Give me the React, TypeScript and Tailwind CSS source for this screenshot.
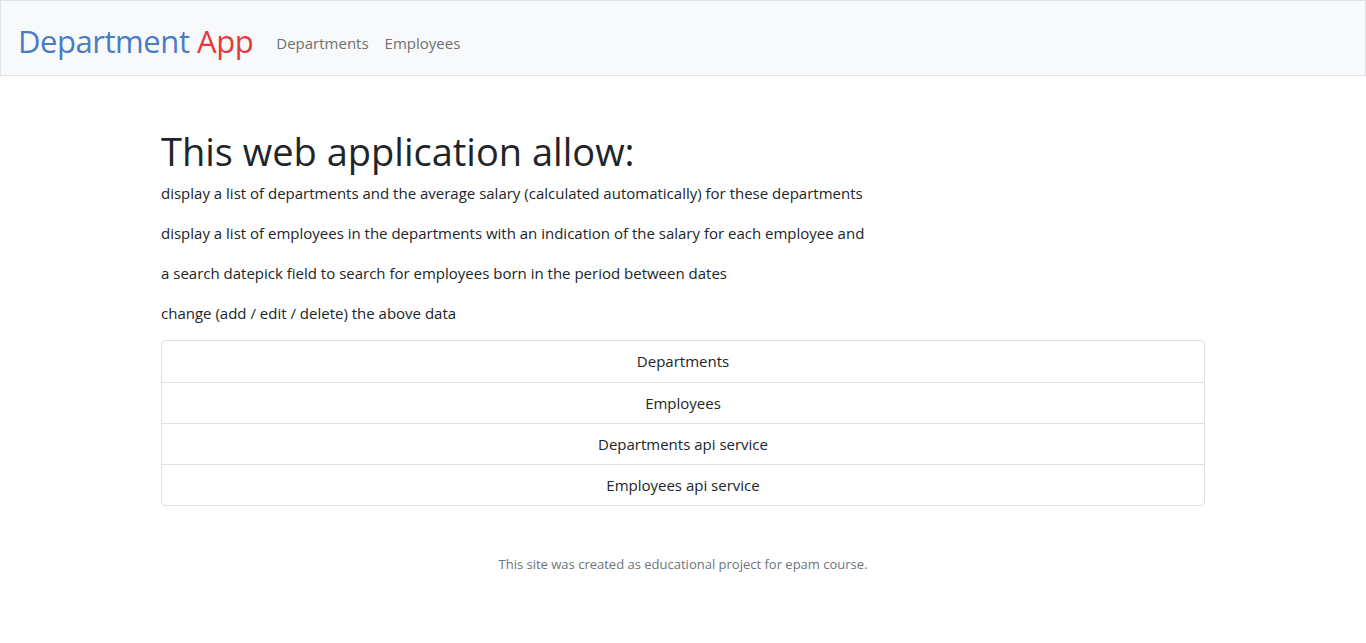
const ITEMS = ['Departments', 'Employees', 'Departments api service', 'Employees api service']

const LINES = [
  'display a list of departments and the average salary (calculated automatically) for these departments',
  'display a list of employees in the departments with an indication of the salary for each employee and',
  'a search datepick field to search for employees born in the period between dates',
  'change (add / edit / delete) the above data',
]

export default function App() {
  return (
    <div className="min-h-[643px] bg-white font-['Open_Sans',sans-serif] text-[#212529]">
      <nav className="flex h-[76px] items-center border border-[#dee2e6] bg-[#f8f9fa] px-[17px] pt-[7px]">
        <a className="text-[31px] leading-none tracking-[-0.45px] text-[#4a7cc6]">
          Department <span className="text-[#e5393b]">App</span>
        </a>
        <div className="ml-[23px] flex gap-4 pt-[3px] text-[15px] text-[#707070]">
          <a>Departments</a>
          <a>Employees</a>
        </div>
      </nav>

      <main className="mx-auto w-[1044px] pt-[51px]">
        <h1 className="mb-[6px] text-[38px] leading-[48px] text-[#212529]">This web application allow:</h1>
        {LINES.map((l) => (
          <p key={l} className="mb-4 text-[15px] leading-6">
            {l}
          </p>
        ))}
        <ul className="-mt-px overflow-hidden rounded border border-[#dfdfdf]">
          {ITEMS.map((it, i) => (
            <li
              key={it}
              className={`flex h-[41px] items-center justify-center text-[15px] ${i > 0 ? 'border-t border-[#dfdfdf]' : ''}`}
            >
              {it}
            </li>
          ))}
        </ul>
        <footer className="pt-[49px] text-center text-[13px] text-[#6c757d]">
          This site was created as educational project for epam course.
        </footer>
      </main>
    </div>
  )
}
